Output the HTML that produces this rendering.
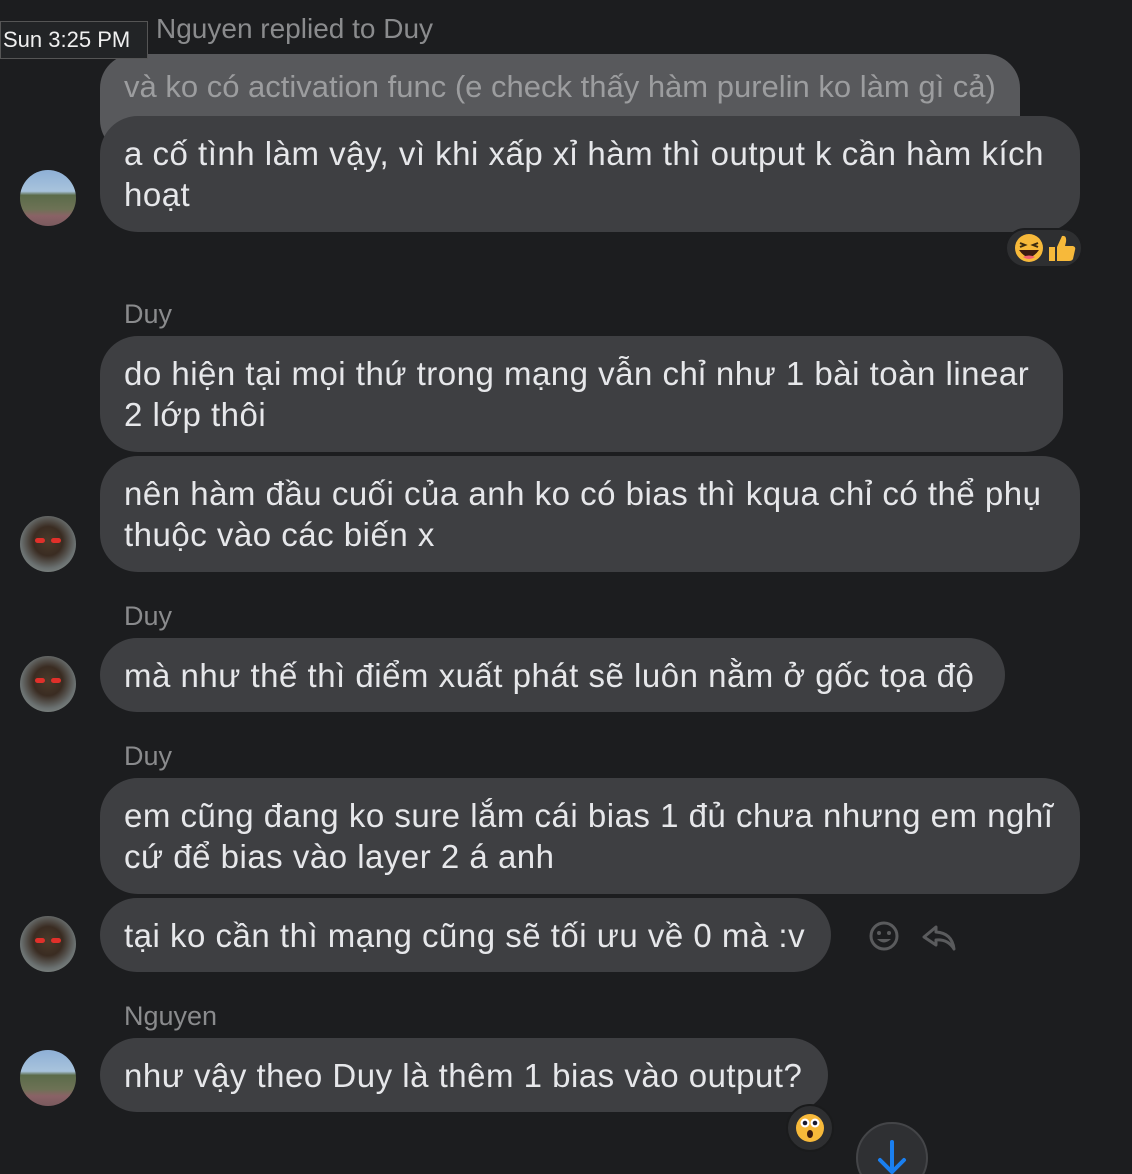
<!DOCTYPE html>
<html style="overflow:hidden;height:1174px"><head><meta charset="utf-8"><style>
body{margin:0;width:1132px;height:1174px;background:#1c1d1f;position:relative;overflow:hidden;font-family:"Liberation Sans","DejaVu Sans",sans-serif;}
.b{position:absolute;left:100px;background:#3e3f42;color:#e6e7ea;font-size:33px;letter-spacing:0.5px;line-height:41px;padding:17px 24px;box-sizing:border-box;border-radius:38px;white-space:nowrap;}
.n{position:absolute;left:124px;color:#8a8b8d;font-size:27px;line-height:30px;}
.av{position:absolute;left:20px;width:56px;height:56px;border-radius:50%;overflow:hidden;}
.park{background:linear-gradient(#8eb0d6 0%,#a8c3dc 38%,#5b6b4a 45%,#6d7255 70%,#8a6266 82%,#7a5a5e 100%);}
.ult{background:radial-gradient(circle at 50% 45%,#4a3a2a 0%,#3a2c22 35%,#6a7070 65%,#9aa098 100%);}
.ult:before,.ult:after{content:"";position:absolute;top:22px;width:10px;height:5px;background:#e0302a;border-radius:3px;}
.ult:before{left:15px}.ult:after{right:15px}
</style></head><body>

<div style="position:absolute;left:0;top:21px;width:148px;height:38px;background:#222426;border:1px solid #555;box-sizing:border-box;color:#f0f0f0;font-size:22px;line-height:36px;padding-left:2px;z-index:5">Sun 3:25 PM</div>
<div style="position:absolute;left:156px;top:14px;color:#8a8b8d;font-size:28px;line-height:30px">Nguyen replied to Duy</div>

<div style="position:absolute;left:100px;top:54px;width:920px;height:100px;background:#58595c;border-radius:34px;color:#9c9d9f;font-size:31px;line-height:66px;padding-left:24px;box-sizing:border-box;white-space:nowrap">và ko có activation func (e check thấy hàm purelin ko làm gì cả)</div>

<div class="b" style="top:116px;width:980px;height:116px">a cố tình làm vậy, vì khi xấp xỉ hàm thì output k cần hàm kích<br>hoạt</div>
<div class="av park" style="top:170px"></div>
<div style="position:absolute;left:1005px;top:228px;width:78px;height:40px;border-radius:20px;background:#2e2f31;border:2px solid #1c1d1f;box-sizing:border-box">
<svg width="74" height="36" viewBox="0 0 74 36" style="position:absolute;left:0;top:0">
<circle cx="22" cy="18" r="14" fill="#f7b93a"/>
<path d="M13 13 L18 15 L13 17 M31 13 L26 15 L31 17" stroke="#3a2a10" stroke-width="2" fill="none"/>
<path d="M12 20 Q22 34 32 20 Z" fill="#3a1a10"/><path d="M16 27 Q22 31 28 27 Q22 24 16 27Z" fill="#f06070"/>
<path d="M42 17 h6 v14 h-6 z M50 31 V17 L55 6 Q60 5 59 12 L58 16 H66 Q69 17 68 20 L66 29 Q65 31 62 31 Z" fill="#f7b93a"/>
</svg></div>

<div class="n" style="top:299px">Duy</div>
<div class="b" style="top:336px;width:963px;height:116px">do hiện tại mọi thứ trong mạng vẫn chỉ như 1 bài toàn linear<br>2 lớp thôi</div>
<div class="b" style="top:456px;width:980px;height:116px">nên hàm đầu cuối của anh ko có bias thì kqua chỉ có thể phụ<br>thuộc vào các biến x</div>
<div class="av ult" style="top:516px"></div>

<div class="n" style="top:601px">Duy</div>
<div class="b" style="top:638px;width:905px;height:74px">mà như thế thì điểm xuất phát sẽ luôn nằm ở gốc tọa độ</div>
<div class="av ult" style="top:656px"></div>

<div class="n" style="top:741px">Duy</div>
<div class="b" style="top:778px;width:980px;height:116px">em cũng đang ko sure lắm cái bias 1 đủ chưa nhưng em nghĩ<br>cứ để bias vào layer 2 á anh</div>
<div class="b" style="top:898px;width:731px;height:74px">tại ko cần thì mạng cũng sẽ tối ưu về 0 mà :v</div>
<div class="av ult" style="top:916px"></div>
<svg style="position:absolute;left:866px;top:918px" width="100" height="36" viewBox="0 0 100 36">
<circle cx="18" cy="18" r="13" fill="none" stroke="#5a5b5d" stroke-width="3"/>
<circle cx="13" cy="15" r="2" fill="#5a5b5d"/><circle cx="23" cy="15" r="2" fill="#5a5b5d"/>
<path d="M11 21 Q18 28 25 21 Z" fill="#5a5b5d"/>
<path d="M70 9 L58 19 L70 27 L70 22 Q82 21 88 31 Q86 15 70 14 Z" fill="none" stroke="#5a5b5d" stroke-width="3" stroke-linejoin="round"/>
</svg>

<div class="n" style="top:1001px">Nguyen</div>
<div class="b" style="top:1038px;width:728px;height:74px">như vậy theo Duy là thêm 1 bias vào output?</div>
<div class="av park" style="top:1050px"></div>
<div style="position:absolute;left:786px;top:1104px;width:48px;height:48px;border-radius:50%;background:#2e2f31;border:2px solid #1a1b1c;box-sizing:border-box">
<svg width="44" height="44" viewBox="0 0 44 44" style="position:absolute;left:0;top:0">
<circle cx="22" cy="22" r="14" fill="#f7b93a"/>
<circle cx="17" cy="17" r="4.5" fill="#fff"/><circle cx="27" cy="17" r="4.5" fill="#fff"/>
<circle cx="17" cy="17" r="2.3" fill="#1a1a30"/><circle cx="27" cy="17" r="2.3" fill="#1a1a30"/>
<ellipse cx="22" cy="28" rx="3" ry="4" fill="#3a1a10"/></svg></div>

<div style="position:absolute;left:856px;top:1122px;width:72px;height:72px;border-radius:50%;background:#2f3033;border:2px solid #444548;box-sizing:border-box"></div>
<svg style="position:absolute;left:872px;top:1140px" width="40" height="34"><path d="M20 2 V32 M8 20 L20 32 L32 20" fill="none" stroke="#1a7ff0" stroke-width="4" stroke-linecap="round" stroke-linejoin="round"/></svg>
</body></html>
